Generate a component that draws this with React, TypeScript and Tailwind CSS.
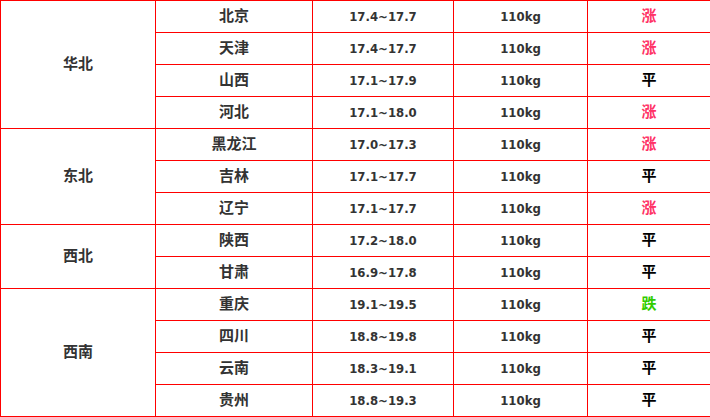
const ROWS: Array<{ region: string; span?: number; city: string; price: string; weight: string; trend: '涨' | '平' | '跌' }> = [
  { region: '华北', span: 4, city: '北京', price: '17.4~17.7', weight: '110kg', trend: '涨' },
  { region: '华北', city: '天津', price: '17.4~17.7', weight: '110kg', trend: '涨' },
  { region: '华北', city: '山西', price: '17.1~17.9', weight: '110kg', trend: '平' },
  { region: '华北', city: '河北', price: '17.1~18.0', weight: '110kg', trend: '涨' },
  { region: '东北', span: 3, city: '黑龙江', price: '17.0~17.3', weight: '110kg', trend: '涨' },
  { region: '东北', city: '吉林', price: '17.1~17.7', weight: '110kg', trend: '平' },
  { region: '东北', city: '辽宁', price: '17.1~17.7', weight: '110kg', trend: '涨' },
  { region: '西北', span: 2, city: '陕西', price: '17.2~18.0', weight: '110kg', trend: '平' },
  { region: '西北', city: '甘肃', price: '16.9~17.8', weight: '110kg', trend: '平' },
  { region: '西南', span: 4, city: '重庆', price: '19.1~19.5', weight: '110kg', trend: '跌' },
  { region: '西南', city: '四川', price: '18.8~19.8', weight: '110kg', trend: '平' },
  { region: '西南', city: '云南', price: '18.3~19.1', weight: '110kg', trend: '平' },
  { region: '西南', city: '贵州', price: '18.8~19.3', weight: '110kg', trend: '平' },
]

const TREND_COLOR: Record<string, string> = {
  涨: 'text-[#ff3366]',
  平: 'text-black',
  跌: 'text-[#33cc00]',
}

const cell = 'border border-[#ff0000] p-0 text-center align-middle'

export default function App() {
  return (
    <div className="h-[417px] w-[710px] bg-white font-['DejaVu_Sans_Condensed','DejaVu_Sans','Noto_Sans_CJK_SC',sans-serif] font-bold text-[#333333]">
      <table className="w-[710px] table-fixed border-collapse">
        <colgroup>
          <col className="w-[155px]" />
          <col className="w-[157px]" />
          <col className="w-[141px]" />
          <col className="w-[134px]" />
          <col className="w-[123px]" />
        </colgroup>
        <tbody>
          {ROWS.map((r) => (
            <tr key={r.city} className="h-[32px]">
              {r.span ? (
                <td rowSpan={r.span} className={`${cell} text-[15px]`}>
                  {r.region}
                </td>
              ) : null}
              <td className={`${cell} text-[15px]`}>{r.city}</td>
              <td className={`${cell} text-[13px]`}>{r.price}</td>
              <td className={`${cell} text-[13px]`}>{r.weight}</td>
              <td className={`${cell} text-[15px] ${TREND_COLOR[r.trend]}`}>{r.trend}</td>
            </tr>
          ))}
        </tbody>
      </table>
    </div>
  )
}
